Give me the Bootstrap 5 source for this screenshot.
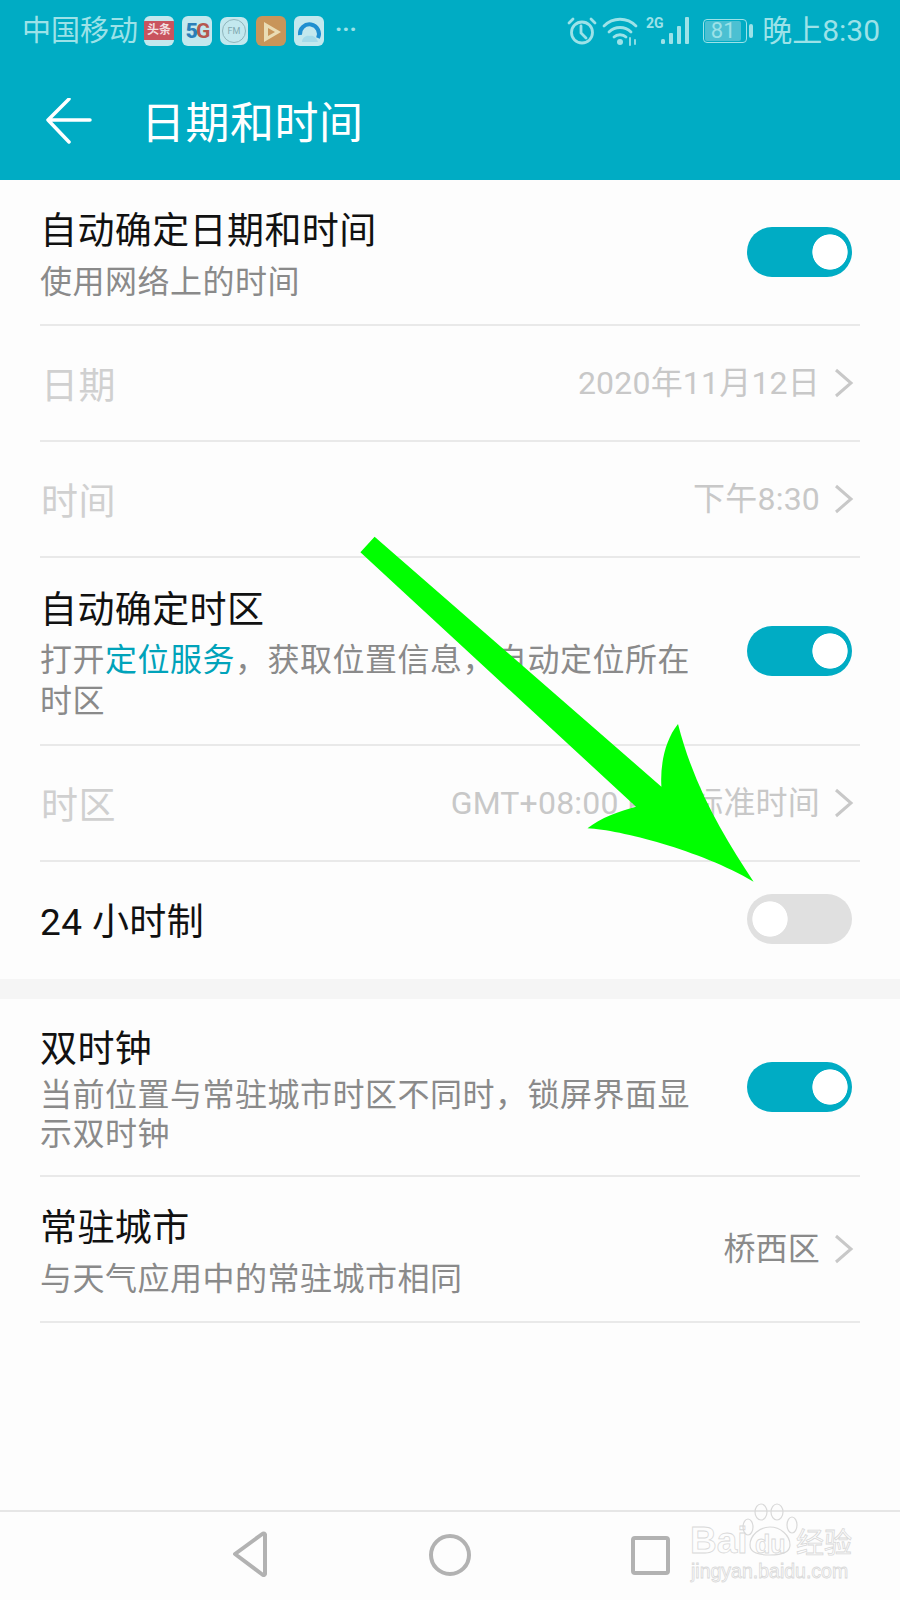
<!DOCTYPE html>
<html lang="zh">
<head>
    <meta charset="utf-8">
    <title>日期和时间</title>
    <link rel="stylesheet" href="https://cdn.jsdelivr.net/npm/bootstrap@5.3.0/dist/css/bootstrap.min.css">
    <style>
        html, body { margin: 0; background: #fdfdfd; }
        body { font-family: Roboto, "Noto Sans CJK SC", sans-serif; }
        .phone { position: relative; width: 900px; height: 1600px; overflow: hidden; background: #fdfdfd; }

        .app-head { height: 180px; background: #00acc4; color: #fff; }
        .status-line { height: 62px; padding: 0 20px 0 22px; color: #9ce2e8; font-size: 29px; line-height: 62px; }
        .carrier { width: 122px; white-space: nowrap; }
        .noti { width: 30px; height: 30px; border-radius: 6px; background: #c3e8ee; font-size: 12px; line-height: 30px; text-align: center; overflow: hidden; }
        .noti-news span { display: block; margin-top: 5px; height: 19px; line-height: 19px; background: #c9545e; color: #f3dfe0; font-weight: 700; }
        .noti-five { font-weight: 700; font-size: 21px; letter-spacing: -2px; }
        .noti-five b { color: #2b7fb8; }
        .noti-five i { color: #b5584f; font-style: normal; }
        .noti-fm { width: 28px; height: 28px; border-radius: 7px; color: #7fa8b0; font-size: 9px; line-height: 18px; display: flex; align-items: center; justify-content: center; }
        .fm-ring { width: 24px; height: 24px; border: 1px solid #8fb4bb; border-radius: 50%; line-height: 22px; }
        .noti-play { background: #c8955a; }
        .more-dots { color: #9ce2e8; font-size: 24px; font-weight: 700; line-height: 1; margin-left: 11px; margin-top: -4px; }
        .wifi-ic { margin-left: 5px; }
        .clock { margin-left: 9px; white-space: nowrap; font-size: 30px; }
        .batt { width: 44px; height: 24px; margin-left: 13px; border: 1.5px solid #9ce2e8; border-radius: 4px; font-size: 22px; text-align: center; padding: 1px; }
        .batt-num { display: block; height: 100%; line-height: 19px; background: #4cc0d2; border-radius: 2px; width: 36px; }
        .batt-nub { width: 4px; height: 14px; background: #9ce2e8; border-radius: 2px; margin-left: 2px; }

        .title-line { height: 118px; padding-left: 46px; }
        .title-line h1 { margin: 6px 0 0 49px; font-size: 44px; font-weight: 400; line-height: 1; letter-spacing: .5px; }

        .setting { padding: 0; margin: 0 40px; border-bottom: 2px solid #e9e9e9; }
        .h-two { height: 146px; }
        .h-one { height: 116px; }
        .h-three { height: 188px; }
        .h-tall { height: 178px; }
        .no-line { border-bottom: 0; height: 117px; }
        .set-text { padding-top: 4px; }
        .h-tall .set-text { padding-top: 5px; }
        .h-tall .set-sub { margin-top: 1px; }
        .h-three .set-name { padding-top: 2px; margin-bottom: -2px; }
        .set-name { font-size: 37px; line-height: 50px; color: #111; letter-spacing: .4px; }
        .set-sub { font-size: 32px; line-height: 39px; color: #8a8a8a; width: 680px; margin-top: 6px; letter-spacing: .5px; }
        .set-sub.roomy { line-height: 41px; }
        .is-off .set-name { color: #d0d0d0; padding-top: 7px; padding-left: 1px; }
        .no-line .set-name { padding-top: 4px; }
        .set-val { font-size: 32px; color: #c8c8c8; white-space: nowrap; letter-spacing: .2px; }
        .set-val.dark { color: #8a8a8a; }
        .accent { color: #00a3ba; }
        .chev { width: 20px; height: 30px; margin-left: 14px; margin-right: 6px; flex: none; }
        .gap-band { height: 20px; background: #f5f5f5; }

        .form-switch.tgl { padding: 0; margin: 0 8px 0 0; min-height: 0; }
        .no-line .form-switch.tgl { margin-top: -4px; }
        .form-switch.tgl .form-check-input { width: 105px; height: 50px; margin: 0; float: none; display: block; border: 0; border-radius: 25px; opacity: 1; box-shadow: none; }
        .form-switch.tgl .form-check-input:checked { background-color: #00acc4; background-image: radial-gradient(circle 18px at 83px 25px, #fff 96%, transparent 100%); background-position: 0 0; }
        .form-switch.tgl .form-check-input:not(:checked) { background-color: #e0e0e0; background-image: radial-gradient(circle 18px at 23px 25px, #fff 96%, transparent 100%); background-position: 0 0; }

        .soft-nav { position: absolute; left: 0; right: 0; bottom: 0; height: 90px; border-top: 2px solid #e6e6e6; background: #fdfdfd; }
        .wm { position: absolute; left: 690px; top: 1503px; width: 170px; height: 85px; color: transparent; -webkit-text-stroke: .8px #d9d9d9; }
        .wm-main { position: absolute; left: 0; top: 18px; font: 700 37px/40px "Liberation Sans", sans-serif; white-space: nowrap; }
        .wm-du { position: absolute; left: 65px; top: 27px; font: 700 25px/28px "Liberation Sans", sans-serif; white-space: nowrap; }
        .wm-cn { position: absolute; left: 106px; top: 20px; font: 400 28px/36px "Noto Sans CJK SC", sans-serif; white-space: nowrap; }
        .wm-url { position: absolute; left: 1px; top: 56px; font: 400 19.500px/24px "Liberation Sans", sans-serif; white-space: nowrap; }
        .wm-paw { position: absolute; left: 52px; top: 0; }
        .pointer { position: absolute; left: 0; top: 0; pointer-events: none; }
    </style>
</head>
<body>
<div class="phone">
    <header class="app-head">
        <div class="status-line d-flex align-items-center">
            <span class="carrier">中国移动</span>
            <div class="d-flex align-items-center gap-2">
                <div class="noti noti-news"><span>头条</span></div>
                <div class="noti noti-five"><b>5</b><i>G</i></div>
                <div class="noti noti-fm"><div class="fm-ring">FM</div></div>
                <div class="noti noti-play">
                    <svg width="30" height="30" viewBox="0 0 30 30"><path d="M8 5l17 10-17 10z" fill="#eadcb4"/><path d="M12 11l7 4-7 4z" fill="#c8955a"/></svg>
                </div>
                <div class="noti">
                    <svg width="30" height="30" viewBox="0 0 30 30"><path d="M6 18a9.500 9.500 0 1 1 18 3" fill="none" stroke="#1f8fd0" stroke-width="4"/><path d="M8 25c0-4 4-7 8-6 3-1 7 2 8 6z" fill="#a6dbea"/></svg>
                </div>
            </div>
            <span class="more-dots">···</span>
            <div class="d-flex align-items-center ms-auto">
                <svg width="30" height="30" viewBox="0 0 30 30" fill="none" stroke="#9ce2e8" stroke-width="2.800" stroke-linecap="round">
                    <circle cx="15" cy="16.500" r="10.500"/><path d="M14 10v7l5 5M2 7l4-4M28 7l-4-4"/>
                </svg>
                <svg class="wifi-ic" width="36" height="30" viewBox="0 0 36 30" fill="none" stroke="#9ce2e8" stroke-width="2.800" stroke-linecap="round">
                    <path d="M2 10c9-9 23-9 32 0M7 16c6-6 16-6 22 0M12 21c3-3 9-3 12 0"/>
                    <circle cx="18" cy="26" r="3" fill="#9ce2e8" stroke="none"/><path d="M28 22v7M33 24v4" stroke-width="1.800"/>
                </svg>
                <svg class="ms-2" width="44" height="30" viewBox="0 0 44 30">
                    <text x="0" y="12" font-family="Roboto, sans-serif" font-size="14" font-weight="700" fill="#9ce2e8">2G</text>
                    <g fill="#9ce2e8"><rect x="15" y="23" width="4" height="5" rx="1.500"/><rect x="23" y="17" width="4" height="11" rx="1"/><rect x="31" y="10" width="4" height="18" rx="1"/><rect x="39" y="1" width="4" height="27" rx="1"/></g>
                </svg>
                <div class="batt"><span class="batt-num">81</span></div>
                <div class="batt-nub"></div>
                <span class="clock">晚上8:30</span>
            </div>
        </div>
        <div class="title-line d-flex align-items-center">
            <svg width="46" height="46" viewBox="0 0 46 46" fill="none" stroke="#fff" stroke-width="3.500" stroke-linecap="round" stroke-linejoin="round">
                <path d="M44 22H2M23 1L2 22l21 22"/>
            </svg>
            <h1>日期和时间</h1>
        </div>
    </header>

    <section>
        <div class="setting h-two d-flex align-items-center justify-content-between">
            <div class="set-text">
                <div class="set-name">自动确定日期和时间</div>
                <div class="set-sub">使用网络上的时间</div>
            </div>
            <div class="form-check form-switch tgl"><input class="form-check-input" type="checkbox" role="switch" checked></div>
        </div>
        <div class="setting h-one is-off d-flex align-items-center justify-content-between">
            <div class="set-name">日期</div>
            <div class="d-flex align-items-center">
                <span class="set-val">2020年11月12日</span>
                <svg class="chev" viewBox="0 0 20 30" fill="none" stroke="#c8c8c8" stroke-width="3"><path d="M2 2l15 13L2 28"/></svg>
            </div>
        </div>
        <div class="setting h-one is-off d-flex align-items-center justify-content-between">
            <div class="set-name">时间</div>
            <div class="d-flex align-items-center">
                <span class="set-val">下午8:30</span>
                <svg class="chev" viewBox="0 0 20 30" fill="none" stroke="#c8c8c8" stroke-width="3"><path d="M2 2l15 13L2 28"/></svg>
            </div>
        </div>
        <div class="setting h-three d-flex align-items-center justify-content-between">
            <div class="set-text">
                <div class="set-name">自动确定时区</div>
                <div class="set-sub roomy">打开<span class="accent">定位服务</span>，获取位置信息，自动定位所在时区</div>
            </div>
            <div class="form-check form-switch tgl"><input class="form-check-input" type="checkbox" role="switch" checked></div>
        </div>
        <div class="setting h-one is-off d-flex align-items-center justify-content-between">
            <div class="set-name">时区</div>
            <div class="d-flex align-items-center">
                <span class="set-val">GMT+08:00 中国标准时间</span>
                <svg class="chev" viewBox="0 0 20 30" fill="none" stroke="#c8c8c8" stroke-width="3"><path d="M2 2l15 13L2 28"/></svg>
            </div>
        </div>
        <div class="setting no-line d-flex align-items-center justify-content-between">
            <div class="set-name">24 小时制</div>
            <div class="form-check form-switch tgl"><input class="form-check-input" type="checkbox" role="switch"></div>
        </div>
    </section>

    <div class="gap-band"></div>

    <section>
        <div class="setting h-tall d-flex align-items-center justify-content-between">
            <div class="set-text">
                <div class="set-name">双时钟</div>
                <div class="set-sub">当前位置与常驻城市时区不同时，锁屏界面显示双时钟</div>
            </div>
            <div class="form-check form-switch tgl"><input class="form-check-input" type="checkbox" role="switch" checked></div>
        </div>
        <div class="setting h-two d-flex align-items-center justify-content-between">
            <div class="set-text">
                <div class="set-name">常驻城市</div>
                <div class="set-sub">与天气应用中的常驻城市相同</div>
            </div>
            <div class="d-flex align-items-center">
                <span class="set-val dark">桥西区</span>
                <svg class="chev" viewBox="0 0 20 30" fill="none" stroke="#c8c8c8" stroke-width="3"><path d="M2 2l15 13L2 28"/></svg>
            </div>
        </div>
    </section>

    <nav class="soft-nav">
        <svg width="900" height="88" viewBox="0 1512 900 88" fill="none" stroke="#b2b2b2" stroke-width="4" stroke-linejoin="round">
            <path d="M265 1536v38a1.500 1.500 0 0 1-2 1l-28-21 28-20.500a1.500 1.500 0 0 1 2 1z"/>
            <circle cx="450" cy="1555" r="19"/>
            <rect x="633" y="1538" width="35" height="35" rx="2"/>
        </svg>
    </nav>

    <div class="wm">
        <span class="wm-main">Bai</span>
        <svg class="wm-paw" width="58" height="54" viewBox="0 0 58 54" fill="none" stroke="#d9d9d9" stroke-width="1.200">
            <ellipse cx="19" cy="9" rx="6" ry="8"/><ellipse cx="35" cy="9" rx="6" ry="8"/><ellipse cx="6" cy="24" rx="5" ry="8"/><ellipse cx="50" cy="22" rx="5" ry="8"/>
            <path d="M8 42c0-10 10-18 20-18s20 8 20 18c0 8-9 10-20 10S8 50 8 42z"/>
        </svg>
        <span class="wm-du">du</span>
        <span class="wm-cn">经验</span>
        <span class="wm-url">jingyan.baidu.com</span>
    </div>

    <svg class="pointer" width="900" height="1600" viewBox="0 0 900 1600">
        <path fill="#00ff00" d="M374.600 536.700L360.400 552.300L636 806.700C620 811 600 818 587.500 828.300C620 830 700 850 753.600 881.700C725 838 695 790 678 724C665 740 660 765 661.400 786.700Z"/>
    </svg>
</div>
<script src="https://cdn.jsdelivr.net/npm/bootstrap@5.3.0/dist/js/bootstrap.bundle.min.js"></script>
</body>
</html>
